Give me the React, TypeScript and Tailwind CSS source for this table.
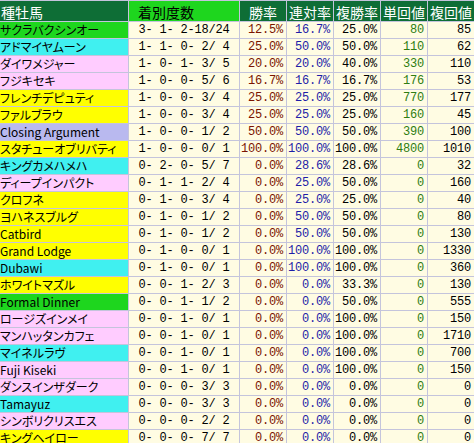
import React from "react";

type Row = [string, string, string, string, string, string, string, string];

const G = "bg-[#1ed61e]";
const C = "bg-[#40f0f0]";
const P = "bg-[#ffccff]";
const Y = "bg-[#ffff00]";
const L = "bg-[#b9b9ef]";

const rows: Row[] = [
  ["サクラバクシンオー", G, "3- 1- 2-18/24", "12.5%", "16.7%", "25.0%", "80", "85"],
  ["アドマイヤムーン", C, "1- 1- 0- 2/ 4", "25.0%", "50.0%", "50.0%", "110", "62"],
  ["ダイワメジャー", P, "1- 0- 1- 3/ 5", "20.0%", "20.0%", "40.0%", "330", "110"],
  ["フジキセキ", P, "1- 0- 0- 5/ 6", "16.7%", "16.7%", "16.7%", "176", "53"],
  ["フレンチデピュティ", Y, "1- 0- 0- 3/ 4", "25.0%", "25.0%", "25.0%", "770", "177"],
  ["ファルブラウ", Y, "1- 0- 0- 3/ 4", "25.0%", "25.0%", "25.0%", "160", "45"],
  ["Closing Argument", L, "1- 0- 0- 1/ 2", "50.0%", "50.0%", "50.0%", "390", "100"],
  ["スタチューオブリバティ", Y, "1- 0- 0- 0/ 1", "100.0%", "100.0%", "100.0%", "4800", "1010"],
  ["キングカメハメハ", C, "0- 2- 0- 5/ 7", "0.0%", "28.6%", "28.6%", "0", "32"],
  ["ディープインパクト", P, "0- 1- 1- 2/ 4", "0.0%", "25.0%", "50.0%", "0", "160"],
  ["クロフネ", Y, "0- 1- 0- 3/ 4", "0.0%", "25.0%", "25.0%", "0", "40"],
  ["ヨハネスブルグ", Y, "0- 1- 0- 1/ 2", "0.0%", "50.0%", "50.0%", "0", "80"],
  ["Catbird", Y, "0- 1- 0- 1/ 2", "0.0%", "50.0%", "50.0%", "0", "130"],
  ["Grand Lodge", Y, "0- 1- 0- 0/ 1", "0.0%", "100.0%", "100.0%", "0", "1330"],
  ["Dubawi", C, "0- 1- 0- 0/ 1", "0.0%", "100.0%", "100.0%", "0", "360"],
  ["ホワイトマズル", Y, "0- 0- 1- 2/ 3", "0.0%", "0.0%", "33.3%", "0", "130"],
  ["Formal Dinner", G, "0- 0- 1- 1/ 2", "0.0%", "0.0%", "50.0%", "0", "555"],
  ["ロージズインメイ", P, "0- 0- 1- 0/ 1", "0.0%", "0.0%", "100.0%", "0", "150"],
  ["マンハッタンカフェ", P, "0- 0- 1- 0/ 1", "0.0%", "0.0%", "100.0%", "0", "1710"],
  ["マイネルラヴ", C, "0- 0- 1- 0/ 1", "0.0%", "0.0%", "100.0%", "0", "700"],
  ["Fuji Kiseki", P, "0- 0- 1- 0/ 1", "0.0%", "0.0%", "100.0%", "0", "150"],
  ["ダンスインザダーク", P, "0- 0- 0- 3/ 3", "0.0%", "0.0%", "0.0%", "0", "0"],
  ["Tamayuz", C, "0- 0- 0- 3/ 3", "0.0%", "0.0%", "0.0%", "0", "0"],
  ["シンボリクリスエス", P, "0- 0- 0- 2/ 2", "0.0%", "0.0%", "0.0%", "0", "0"],
  ["キングヘイロー", Y, "0- 0- 0- 7/ 7", "0.0%", "0.0%", "0.0%", "0", "0"],
];

const num =
  "bg-[#fffce3] h-[16px] flex items-center justify-end pr-[3px] pt-[1px] font-['Liberation_Mono',monospace] text-[12px] tracking-[-0.2px] leading-[15px] whitespace-pre";

const head =
  "bg-[#0e6e36] h-[20px] flex items-center justify-center pt-[2px] text-white font-['Noto_Sans_CJK_JP',sans-serif] text-[14px] leading-[18px] whitespace-nowrap";

export default function App() {
  return (
    <div className="w-[474px] h-[443px] overflow-hidden bg-white">
      <div className="grid grid-cols-[128px_110px_46px_46px_46px_46px_46px] gap-px bg-[#c4c4dc] pt-px">
        <div className={head + " !justify-start pl-[1px]"}>種牡馬</div>
        <div className="bg-[#1ed61e] h-[20px] flex items-center pl-[9px] pt-[2px] text-black font-['Noto_Sans_CJK_JP',sans-serif] text-[14px] leading-[18px]">
          着別度数
        </div>
        <div className={head}>勝率</div>
        <div className={head}>連対率</div>
        <div className={head}>複勝率</div>
        <div className={head}>単回値</div>
        <div className={head}>複回値</div>
        {rows.map((r, i) => (
          <React.Fragment key={i}>
            <div
              className={
                r[1] +
                " h-[16px] flex items-center overflow-hidden whitespace-nowrap text-black font-['Noto_Sans_CJK_JP',sans-serif] text-[12px] leading-[16px] [font-feature-settings:'palt']"
              }
            >
              {r[0]}
            </div>
            <div className={num + " !justify-center !pr-0 text-black"}>{r[2]}</div>
            <div className={num + " text-[#7a1400]"}>{r[3]}</div>
            <div className={num + " text-[#1e1ea8]"}>{r[4]}</div>
            <div className={num + " text-black"}>{r[5]}</div>
            <div className={num + " text-[#2e7d12]"}>{r[6]}</div>
            <div className={num + " text-black"}>{r[7]}</div>
          </React.Fragment>
        ))}
      </div>
    </div>
  );
}
